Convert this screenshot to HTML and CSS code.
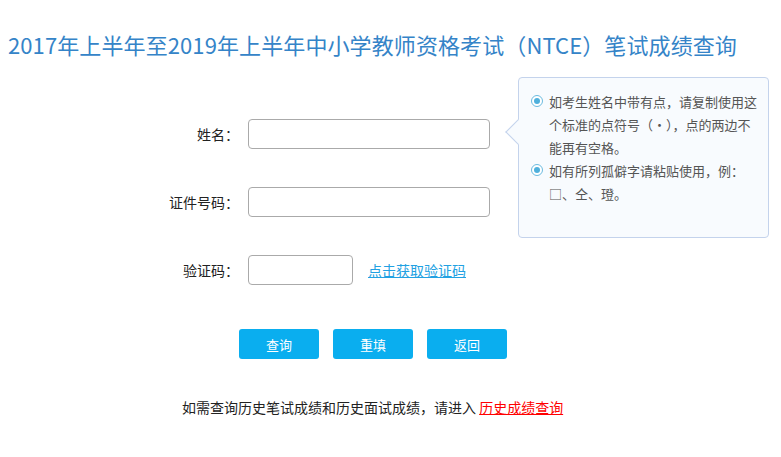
FILE: index.html
```html
<!DOCTYPE html>
<html lang="zh-CN">
<head>
<meta charset="utf-8">
<title>NTCE 笔试成绩查询</title>
<link rel="stylesheet" href="styles.css">
</head>
<body>
<h1 class="title">2017年上半年至2019年上半年中小学教师资格考试（NTCE）笔试成绩查询</h1>
<div class="main">
  <form class="form">
    <div class="row">
      <label class="label">姓名：</label>
      <input class="input input-long" type="text">
    </div>
    <div class="row">
      <label class="label">证件号码：</label>
      <input class="input input-long" type="text">
    </div>
    <div class="row">
      <label class="label">验证码：</label>
      <input class="input input-short" type="text">
      <a class="code-link" href="#">点击获取验证码</a>
    </div>
    <div class="buttons">
      <button type="button" class="btn">查询</button>
      <button type="button" class="btn">重填</button>
      <button type="button" class="btn">返回</button>
    </div>
  </form>
  <p class="history">如需查询历史笔试成绩和历史面试成绩，请进入 <a class="history-link" href="#">历史成绩查询</a></p>
  <div class="tip">
    <span class="tip-arrow"></span>
    <div class="tip-item">
      <span class="radio"></span>
      <p class="tip-text">如考生姓名中带有点，请复制使用这<br>个标准的点符号（·），点的两边不<br>能再有空格。</p>
    </div>
    <div class="tip-item">
      <span class="radio"></span>
      <p class="tip-text">如有所列孤僻字请粘贴使用，例：<br>□、仝、璒。</p>
    </div>
  </div>
</div>
</body>
</html>
```
FILE: styles.css
```css
html, body {
  margin: 0;
  padding: 0;
  background: #ffffff;
}
body {
  font-family: "Microsoft YaHei", "Noto Sans CJK SC", "Noto Sans", sans-serif;
  font-size: 14px;
  color: #222;
}
.title {
  margin: 0;
  padding: 29px 0 0 8px;
  font-size: 22px;
  line-height: 30px;
  font-weight: normal;
  color: #3584c8;
  white-space: nowrap;
  letter-spacing: 0.1px;
}
.main {
  position: relative;
  padding-top: 60px;
}
.form {
  margin: 0;
}
.row {
  display: flex;
  align-items: center;
  height: 30px;
  margin-bottom: 38px;
}
.label {
  width: 248px;
  text-align: right;
  padding-right: 9px;
  box-sizing: border-box;
  color: #222;
  font-size: 14px;
}
.input {
  height: 30px;
  box-sizing: border-box;
  border: 1px solid #aaaaaa;
  border-radius: 4px;
  background: #fff;
  padding: 0 6px;
  font-size: 14px;
  margin: 0;
}
.input-long {
  width: 242px;
}
.input-short {
  width: 105px;
}
.code-link {
  margin-left: 15px;
  color: #22a1e2;
  text-decoration: underline;
  font-size: 14px;
}
.buttons {
  display: flex;
  gap: 14px;
  padding-left: 239px;
  margin-top: 44px;
}
.btn {
  width: 80px;
  height: 30px;
  border: none;
  border-radius: 3px;
  background: #0aaeef;
  color: #fff;
  font-family: inherit;
  font-size: 13px;
  padding: 0;
  cursor: pointer;
}
.history {
  margin: 38px 0 0;
  padding-left: 182px;
  line-height: 20px;
  color: #222;
  font-size: 14px;
}
.history-link {
  color: #ff0000;
  text-decoration: underline;
}
.tip {
  position: absolute;
  left: 518px;
  top: 18px;
  width: 251px;
  height: 161px;
  box-sizing: border-box;
  border: 1px solid #c4d3ec;
  border-radius: 4px;
  background: #f8fbfe;
  padding: 12px 8px 0 12px;
}
.tip-arrow {
  position: absolute;
  left: -10px;
  top: 45px;
  width: 18px;
  height: 18px;
  box-sizing: border-box;
  background: #f8fbfe;
  border-left: 1px solid #c4d3ec;
  border-bottom: 1px solid #c4d3ec;
  transform: rotate(45deg);
}
.tip-item {
  display: flex;
  align-items: flex-start;
  position: relative;
}
.radio {
  flex: none;
  width: 12px;
  height: 12px;
  box-sizing: border-box;
  border: 1px solid #6bbbe0;
  border-radius: 50%;
  margin-top: 5px;
  margin-right: 6px;
  position: relative;
  background: #fff;
}
.radio::after {
  content: "";
  position: absolute;
  left: 2px;
  top: 2px;
  width: 6px;
  height: 6px;
  border-radius: 50%;
  background: #4fb0dc;
}
.tip-text {
  margin: 0;
  line-height: 23px;
  color: #555;
  font-size: 13px;
  white-space: nowrap;
}
```
